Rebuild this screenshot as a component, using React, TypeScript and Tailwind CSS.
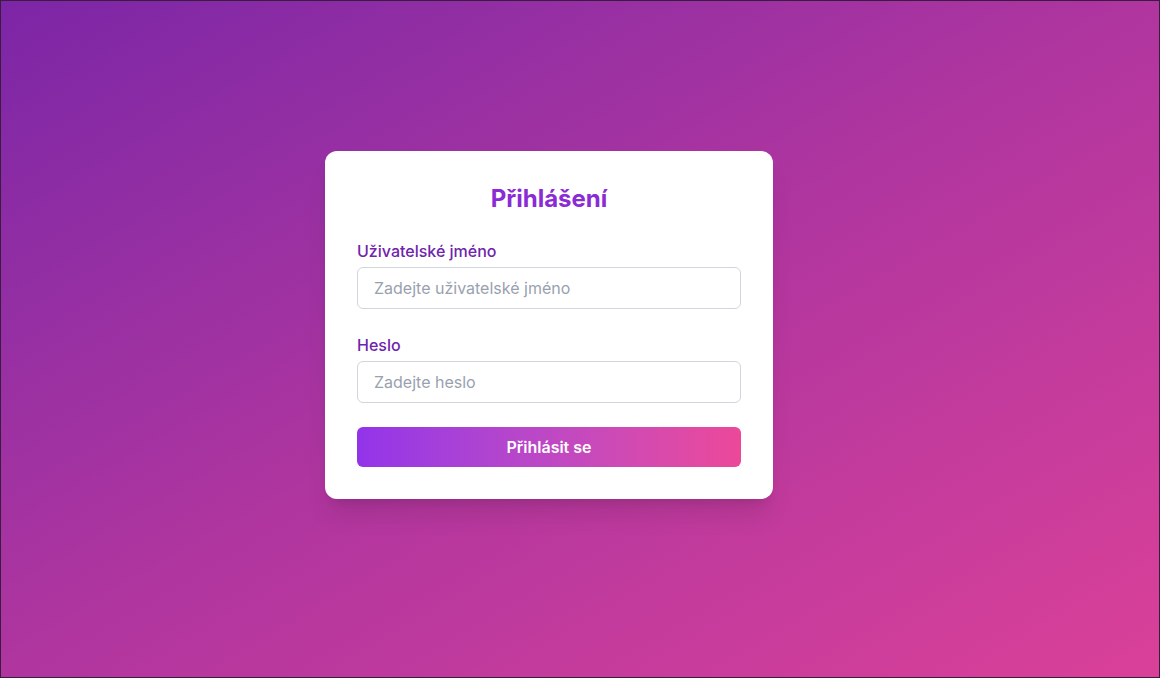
import React from "react";

export default function App() {
  return (
    <div
      className="w-[1160px] h-[678px] border border-[#3a1c40] bg-gradient-to-br from-[#7c25a6] via-[#b0359f] to-[#da4098] flex items-start justify-start pt-[150px] pl-[324px]"
      style={{ fontFamily: "Inter, 'Noto Sans', sans-serif" }}
    >
      <div className="w-[448px] bg-white rounded-xl shadow-xl p-8">
        <h1 className="text-2xl leading-8 font-bold text-center text-[#8a2bd6] mb-6">Přihlášení</h1>
        <div className="flex flex-col gap-6">
          <div>
            <label className="block text-base leading-6 font-medium text-[#6f24ad]">Uživatelské jméno</label>
            <input
              type="text"
              placeholder="Zadejte uživatelské jméno"
              className="mt-1 block w-full h-[42px] px-4 border border-gray-300 rounded-md text-base text-gray-700 placeholder:text-gray-400 outline-none"
            />
          </div>
          <div>
            <label className="block text-base leading-6 font-medium text-[#6f24ad]">Heslo</label>
            <input
              type="password"
              placeholder="Zadejte heslo"
              className="mt-1 block w-full h-[42px] px-4 border border-gray-300 rounded-md text-base text-gray-700 placeholder:text-gray-400 outline-none"
            />
          </div>
          <button className="w-full h-10 rounded-md bg-gradient-to-r from-[#9333ea] to-[#ec4899] text-white font-semibold text-base">
            Přihlásit se
          </button>
        </div>
      </div>
    </div>
  );
}
